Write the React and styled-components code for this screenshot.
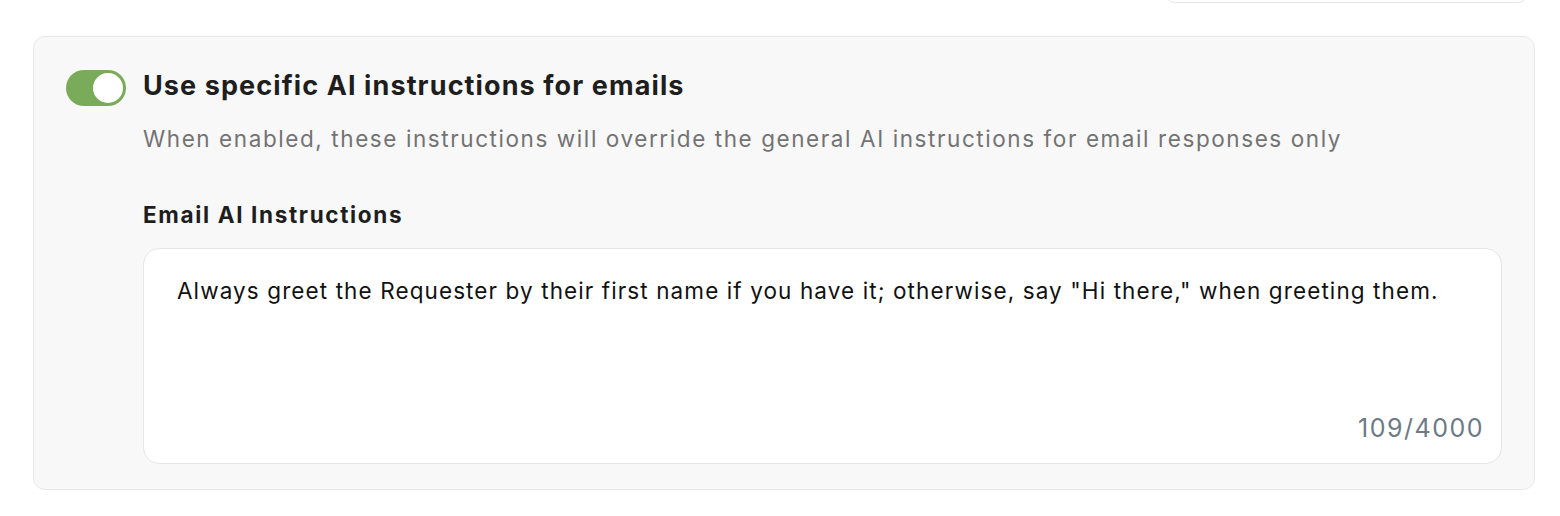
import React, { useState } from 'react'
import styled, { createGlobalStyle } from 'styled-components'

const GlobalStyle = createGlobalStyle`
  html, body {
    margin: 0;
    padding: 0;
    background: #ffffff;
  }
  body {
    font-family: Inter, "Noto Sans", sans-serif;
    -webkit-font-smoothing: antialiased;
  }
`

const text = 'Always greet the Requester by their first name if you have it; otherwise, say "Hi there," when greeting them.'

export default function App() {
  const [enabled, setEnabled] = useState(true)
  const [value, setValue] = useState(text)

  return (
    <Page>
      <GlobalStyle />
      <TopBar>
        <TopButton />
      </TopBar>
      <Card>
        <Toggle
          type="button"
          role="switch"
          aria-checked={enabled}
          $on={enabled}
          onClick={() => setEnabled(!enabled)}
        >
          <Knob $on={enabled} />
        </Toggle>
        <Content>
          <Title>Use specific AI instructions for emails</Title>
          <Description>
            When enabled, these instructions will override the general AI instructions for email responses only
          </Description>
          <FieldLabel>Email AI Instructions</FieldLabel>
          <Field>
            <TextArea
              value={value}
              maxLength={4000}
              spellCheck={false}
              onChange={(e) => setValue(e.target.value)}
            />
            <Counter>{value.length}/4000</Counter>
          </Field>
        </Content>
      </Card>
    </Page>
  )
}

const Page = styled.div`
  display: flex;
  flex-direction: column;
  padding: 0 25px 0 33px;
`
const TopBar = styled.div`
  display: flex;
  justify-content: flex-end;
  padding-right: 7px;
  margin-bottom: 33px;
`
const TopButton = styled.div`
  box-sizing: border-box;
  width: 363px;
  height: 44px;
  margin-top: -41px;
  background: #ffffff;
  border: 1px solid #e6e6e6;
  border-radius: 10px;
`
const Card = styled.section`
  display: flex;
  gap: 17px;
  background: #f8f8f8;
  border: 1px solid #e8e8e8;
  border-radius: 12px;
  padding: 33px 32px 25px 32px;
`
const Toggle = styled.button`
  flex: none;
  position: relative;
  width: 60px;
  height: 36px;
  padding: 0;
  border: none;
  border-radius: 18px;
  background: ${(p) => (p.$on ? '#7aab5b' : '#cfcfcf')};
  cursor: pointer;
`
const Knob = styled.span`
  position: absolute;
  top: 3px;
  left: ${(p) => (p.$on ? '27px' : '3px')};
  width: 30px;
  height: 30px;
  border-radius: 50%;
  background: #ffffff;
`
const Content = styled.div`
  flex: 1;
  display: flex;
  flex-direction: column;
`
const Title = styled.h2`
  margin: 0;
  font-size: 27px;
  line-height: 32px;
  font-weight: 700;
  color: #1e1e1e;
  letter-spacing: 1.1px;
`
const Description = styled.p`
  margin: 22px 0 0 0;
  font-size: 22.5px;
  line-height: 30px;
  color: #737373;
  letter-spacing: 1.58px;
`
const FieldLabel = styled.label`
  margin-top: 46px;
  font-size: 22.5px;
  line-height: 30px;
  font-weight: 700;
  color: #1e1e1e;
  letter-spacing: 1.65px;
`
const Field = styled.div`
  position: relative;
  margin-top: 18px;
  height: 216px;
  background: #ffffff;
  border: 1px solid #e6e6e6;
  border-radius: 16px;
  box-sizing: border-box;
`
const TextArea = styled.textarea`
  display: block;
  width: 100%;
  height: 100%;
  box-sizing: border-box;
  padding: 27px 33px 50px 33px;
  border: none;
  background: transparent;
  resize: none;
  outline: none;
  font-family: inherit;
  font-size: 22.5px;
  line-height: 30px;
  color: #111111;
  letter-spacing: 1.1px;
`
const Counter = styled.span`
  position: absolute;
  right: 17px;
  bottom: 20px;
  font-size: 25px;
  line-height: 30px;
  color: #6d7a86;
  letter-spacing: 1.5px;
`
